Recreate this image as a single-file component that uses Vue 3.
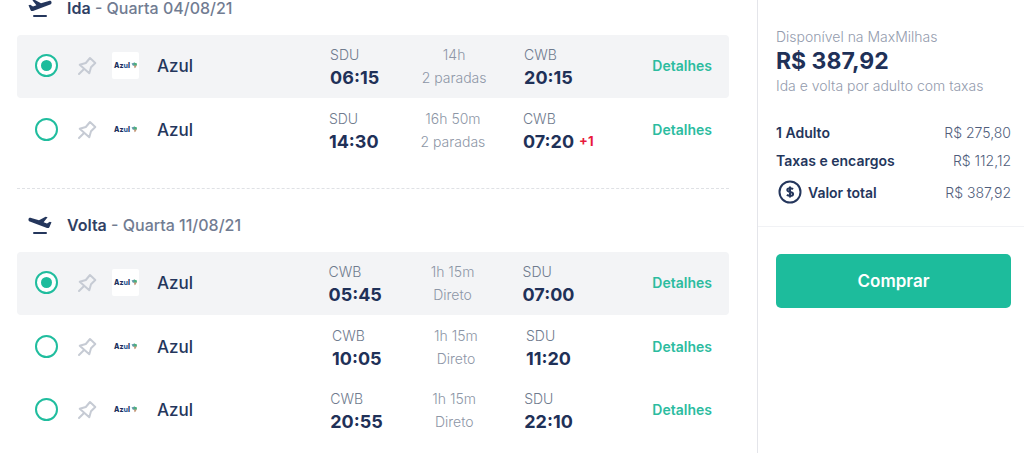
<script setup>
import { reactive } from 'vue'

const trips = [
  {
    id: 'ida', title: 'Ida', date: 'Quarta 04/08/21',
    flights: [
      { from: 'SDU', out: '06:15', time: '14h', stops: '2 paradas', to: 'CWB', arrive: '20:15' },
      { from: 'SDU', out: '14:30', time: '16h 50m', stops: '2 paradas', to: 'CWB', arrive: '07:20', extra: '+1' },
    ],
  },
  {
    id: 'volta', title: 'Volta', date: 'Quarta 11/08/21',
    flights: [
      { from: 'CWB', out: '05:45', time: '1h 15m', stops: 'Direto', to: 'SDU', arrive: '07:00' },
      { from: 'CWB', out: '10:05', time: '1h 15m', stops: 'Direto', to: 'SDU', arrive: '11:20' },
      { from: 'CWB', out: '20:55', time: '1h 15m', stops: 'Direto', to: 'SDU', arrive: '22:10' },
    ],
  },
]
const selected = reactive({ ida: 0, volta: 0 })
</script>

<template>
  <div class="page">
    <main class="trips">
      <section v-for="trip in trips" :key="trip.id" class="trip">
        <h2 class="heading">
          <svg class="plane" :class="{ outbound: trip.id === 'ida' }" viewBox="0 0 24 22" aria-hidden="true">
            <path d="M.5 5.200C.8 3.800 1.900 3.600 3.200 4L11 6.200l6.600-3.500 2 .5-4 5 3.400 1.200 2.800-1.600 1.700.5-2 4.600c-.5 1.100-1.400 1.400-2.500 1L1.800 7.500C.7 7.100.3 6.200.5 5.200z" />
            <rect x="5" y="18" width="14" height="2" rx="1" />
          </svg>
          <span><span class="name">{{ trip.title }}</span> - {{ trip.date }}</span>
        </h2>
        <div
          v-for="(flight, i) in trip.flights"
          :key="flight.out"
          class="flight"
          :class="{ active: selected[trip.id] === i }"
        >
          <div class="airline">
            <input :id="trip.id + i" v-model="selected[trip.id]" class="radio" type="radio" :name="trip.id" :value="i" />
            <button class="pin" type="button" aria-label="Fixar voo">
              <svg viewBox="0 0 20 20" aria-hidden="true">
                <path d="M13 2l5.300 5-4.300 4.300-1.700 5.900L2.700 8.800 8.800 7zM6.800 13.200L2 18" />
              </svg>
            </button>
            <svg class="logo" viewBox="0 0 27 27" aria-hidden="true">
              <rect width="27" height="27" rx="2" fill="#fff" />
              <text x="2" y="16" font-size="7" font-weight="800" fill="#1d2f5c">Az<tspan fill="#2f5f9c">u</tspan><tspan fill="#1d2f5c">l</tspan></text>
              <path d="M19.500 11.500l3-1v3.200h-1.600z" fill="#6299a8" />
              <path d="M22 10.500l3 1-.3 2.200-2.500.2z" fill="#47ad7c" />
              <path d="M22 13.500h2.700l-1.200 2.200-1 .5z" fill="#c29576" />
            </svg>
            <label class="company" :for="trip.id + i">Azul</label>
          </div>
          <div class="times">
            <div class="stop"><span>{{ flight.from }}</span><strong>{{ flight.out }}</strong></div>
            <div class="duration"><span>{{ flight.time }}</span><span>{{ flight.stops }}</span></div>
            <div class="stop">
              <span>{{ flight.to }}</span><strong>{{ flight.arrive }}</strong>
              <em v-if="flight.extra" class="extra">{{ flight.extra }}</em>
            </div>
          </div>
          <a class="details" href="#">Detalhes</a>
        </div>
      </section>
    </main>

    <aside class="summary">
      <div class="prices">
        <p class="note">Disponível na MaxMilhas</p>
        <p class="price">R$ 387,92</p>
        <p class="note">Ida e volta por adulto com taxas</p>
        <dl class="lines">
          <div class="line"><dt>1 Adulto</dt><dd>R$ 275,80</dd></div>
          <div class="line"><dt>Taxas e encargos</dt><dd>R$ 112,12</dd></div>
          <div class="line total">
            <dt>
              <svg class="coin" viewBox="0 0 24 24" aria-hidden="true">
                <circle cx="12" cy="12" r="10.500" />
                <path d="M15 9.300c-.7-.7-1.700-1-2.900-1-1.700 0-2.800.7-2.800 1.800 0 2.600 5.800 1.200 5.800 3.800 0 1.200-1.200 1.900-3 1.900-1.300 0-2.500-.4-3.200-1.100M12 6.500v11" />
              </svg>
              Valor total
            </dt>
            <dd>R$ 387,92</dd>
          </div>
        </dl>
      </div>
      <div class="action"><button class="buy" type="button">Comprar</button></div>
    </aside>
  </div>
</template>

<style>
body {
  margin: 0;
  background: #fff;
}
</style>

<style scoped>
.page {
  display: flex;
  min-height: 100vh;
  overflow: hidden;
  box-sizing: border-box;
  font-family: Inter, "Open Sans", sans-serif;
  font-size: 14px;
  color: #24365c;
}
.trips {
  flex: 1;
  min-width: 0;
  margin-top: -19px;
  padding: 0 28px 0 17px;
}
.trip + .trip {
  margin-top: 26px;
  padding-top: 9px;
  border-top: 1px dashed #dfe1e5;
}
.heading {
  display: flex;
  align-items: center;
  gap: 15px;
  height: 54px;
  margin: 0;
  padding-left: 11px;
  font-size: 16px;
  font-weight: 500;
  color: #717c92;
}
.name {
  font-weight: 600;
  color: #2f4064;
}
.plane {
  width: 24px;
  height: 22px;
  fill: #24365c;
}
.outbound {
  transform: scaleX(-1);
}
.flight {
  display: grid;
  grid-template-columns: 256fr 321fr 100fr;
  align-items: center;
  box-sizing: border-box;
  height: 63px;
  padding: 0 17px 2px 18px;
  border-radius: 4px;
}
.active {
  margin-bottom: 1px;
  background: #f3f4f6;
}
.airline {
  display: flex;
  align-items: center;
}
.radio {
  display: grid;
  place-items: center;
  appearance: none;
  width: 23px;
  height: 23px;
  margin: 0 19px 0 0;
  border: 2px solid #20bd9e;
  border-radius: 50%;
  background: #fff;
}
.radio:checked::after {
  content: "";
  width: 11px;
  height: 11px;
  border-radius: 50%;
  background: #1dbc9c;
}
.pin {
  display: flex;
  margin: 0 15px 0 0;
  padding: 0;
  border: 0;
  background: none;
}
.pin svg {
  width: 20px;
  height: 20px;
  fill: none;
  stroke: #c6cbd4;
  stroke-width: 2;
  stroke-linejoin: round;
  stroke-linecap: round;
}
.logo {
  width: 27px;
  height: 27px;
  margin-right: 18px;
}
.company {
  font-size: 17px;
  font-weight: 500;
}
.times {
  display: grid;
  grid-template-columns: 72px 104px auto;
  justify-content: center;
}
.stop,
.duration {
  display: flex;
  flex-direction: column;
  font-weight: 300;
  line-height: 23px;
  white-space: nowrap;
  color: #6f7b8e;
}
.stop {
  position: relative;
}
.stop:last-child {
  margin-left: 18px;
}
.stop strong {
  font-size: 18px;
  font-weight: 700;
  color: #1f3158;
}
.duration {
  align-items: center;
  color: #8d96a6;
}
.extra {
  position: absolute;
  left: 100%;
  bottom: 0;
  margin-left: 5px;
  font-size: 13px;
  font-style: normal;
  font-weight: 700;
  color: #e8193c;
}
.details {
  justify-self: end;
  font-weight: 600;
  color: #2cbc9f;
  text-decoration: none;
}
.summary {
  flex: 0 0 266px;
  border-left: 1px solid #e4e5ea;
}
.prices {
  padding: 26px 13px 16px 18px;
  border-bottom: 1px solid #f1f2f5;
}
.note {
  margin: 0;
  font-weight: 300;
  line-height: 21px;
  color: #939bad;
}
.price {
  margin: 0;
  font-size: 23px;
  font-weight: 700;
  line-height: 28px;
  color: #1f3158;
}
.lines {
  margin: 22px 0 0;
}
.line {
  display: flex;
  align-items: center;
  justify-content: space-between;
  height: 28px;
}
.line dt {
  display: flex;
  align-items: center;
  gap: 6px;
  font-weight: 600;
  color: #24365c;
}
.line dd {
  margin: 0;
  font-weight: 300;
  color: #4f5d7b;
}
.total {
  height: 36px;
}
.coin {
  width: 24px;
  height: 24px;
  margin-left: 2px;
  fill: none;
  stroke: #24365c;
  stroke-width: 2;
}
.action {
  padding: 27px 13px 27px 18px;
}
.buy {
  width: 100%;
  height: 54px;
  border: 0;
  border-radius: 5px;
  background: #1dbc9c;
  font: 600 17px Inter, "Open Sans", sans-serif;
  color: #fff;
}
</style>
